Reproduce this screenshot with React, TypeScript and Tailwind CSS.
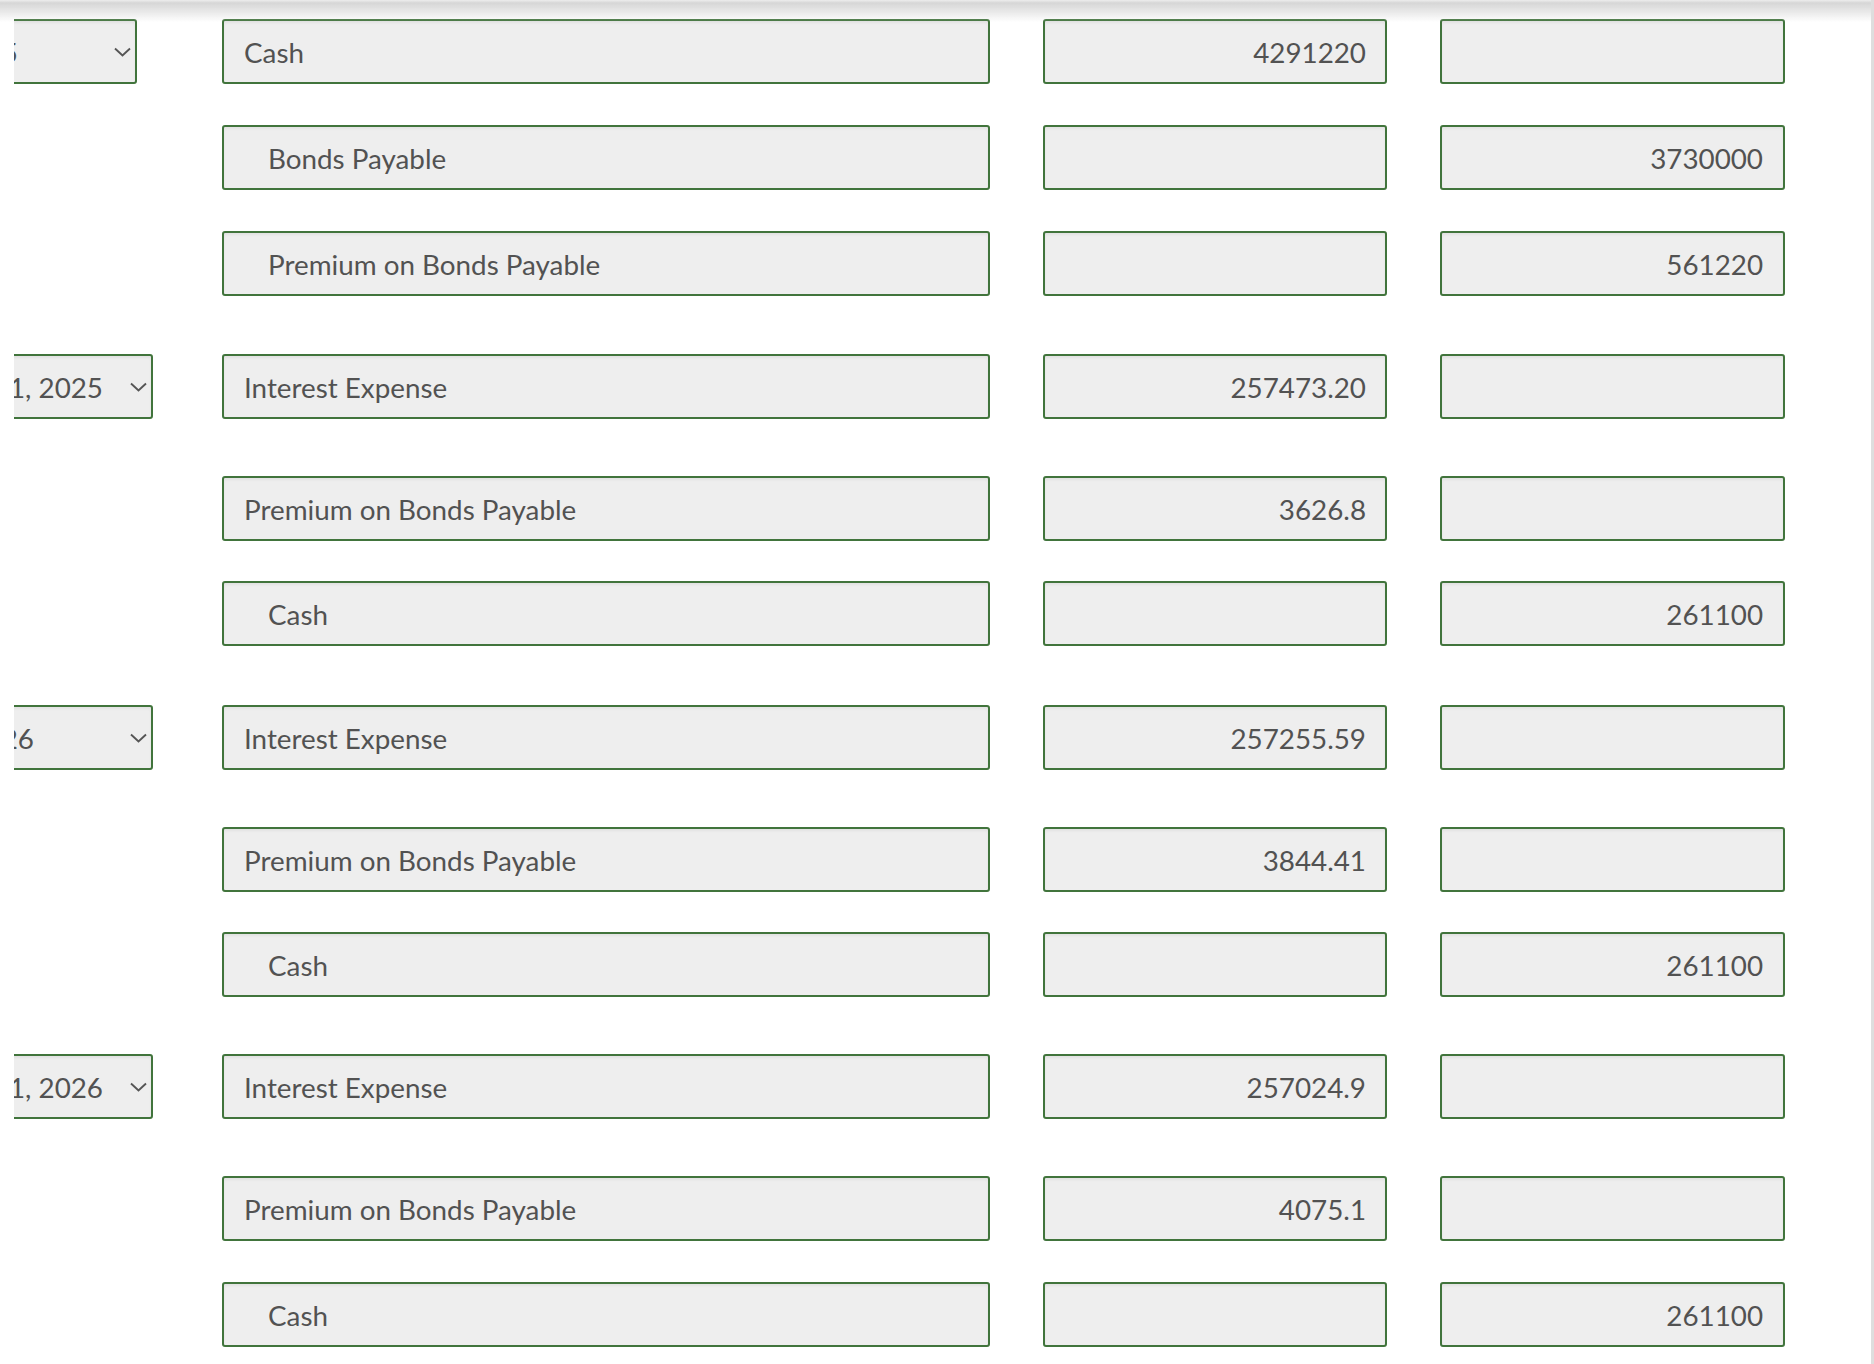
import React from "react";

type Sel = { w: string; text: string; gap: string };
type Row = {
  mt: string;
  sel?: Sel;
  acct: string;
  indent: boolean;
  dr: string;
  cr: string;
};

const rows: Row[] = [
  { mt: "", sel: { w: "w-[123px]", text: "Jan. 1, 2025", gap: "w-[96px]" }, acct: "Cash", indent: false, dr: "4291220", cr: "" },
  { mt: "mt-[41px]", acct: "Bonds Payable", indent: true, dr: "", cr: "3730000" },
  { mt: "mt-[41px]", acct: "Premium on Bonds Payable", indent: true, dr: "", cr: "561220" },
  { mt: "mt-[58px]", sel: { w: "w-[139px]", text: "Dec. 31, 2025", gap: "w-[27px]" }, acct: "Interest Expense", indent: false, dr: "257473.20", cr: "" },
  { mt: "mt-[57px]", acct: "Premium on Bonds Payable", indent: false, dr: "3626.8", cr: "" },
  { mt: "mt-[40px]", acct: "Cash", indent: true, dr: "", cr: "261100" },
  { mt: "mt-[59px]", sel: { w: "w-[139px]", text: "Jan. 1, 2026", gap: "w-[96px]" }, acct: "Interest Expense", indent: false, dr: "257255.59", cr: "" },
  { mt: "mt-[57px]", acct: "Premium on Bonds Payable", indent: false, dr: "3844.41", cr: "" },
  { mt: "mt-[40px]", acct: "Cash", indent: true, dr: "", cr: "261100" },
  { mt: "mt-[57px]", sel: { w: "w-[139px]", text: "Dec. 31, 2026", gap: "w-[27px]" }, acct: "Interest Expense", indent: false, dr: "257024.9", cr: "" },
  { mt: "mt-[57px]", acct: "Premium on Bonds Payable", indent: false, dr: "4075.1", cr: "" },
  { mt: "mt-[41px]", acct: "Cash", indent: true, dr: "", cr: "261100" },
];

const boxBase =
  "h-[65px] shrink-0 border-2 border-[#41743c] rounded-[3px] bg-[#eeeeee] shadow-[inset_0_2px_3px_rgba(0,0,0,0.05)] flex items-center pt-[2px] text-[#525252] text-[27.8px] whitespace-nowrap";

function Chevron() {
  return (
    <svg width="17" height="10" viewBox="0 0 17 10" className="shrink-0 -mt-[1px]">
      <polyline points="1,1.5 8.5,8.5 16,1.5" fill="none" stroke="#555555" strokeWidth="1.9" />
    </svg>
  );
}

function DateSelect({ sel }: { sel: Sel }) {
  return (
    <div className={`${sel.w} h-[65px] overflow-hidden flex justify-end`}>
      <div className={`${boxBase} pl-[10px] pr-[4px]`}>
        <span>{sel.text}</span>
        <span className={`${sel.gap} shrink-0`} />
        <Chevron />
      </div>
    </div>
  );
}

export default function App() {
  return (
    <div className="relative min-h-screen bg-white border-r-[3px] border-[#dedede] [font-family:Lato,'Noto_Sans',sans-serif]">
      <div className="pointer-events-none fixed top-0 left-0 right-[3px] h-[22px] bg-[linear-gradient(to_bottom,#ededed_0px,#d6d6d6_3px,rgba(255,255,255,0)_22px)]" />
      <div className="pt-[19px] pb-[17px] flex flex-col">
        {rows.map((r, i) => (
          <div key={i} className={`${r.mt} flex items-start`}>
            <div className="w-[222px] shrink-0 pl-[14px]">
              {r.sel ? <DateSelect sel={r.sel} /> : null}
            </div>
            <div className={`${boxBase} w-[768px] ${r.indent ? "pl-[44px]" : "pl-[20px]"}`}>
              {r.acct}
            </div>
            <div className={`${boxBase} w-[344px] ml-[53px] justify-end pr-[19px]`}>{r.dr}</div>
            <div className={`${boxBase} w-[345px] ml-[53px] justify-end pr-[20px]`}>{r.cr}</div>
          </div>
        ))}
      </div>
    </div>
  );
}
